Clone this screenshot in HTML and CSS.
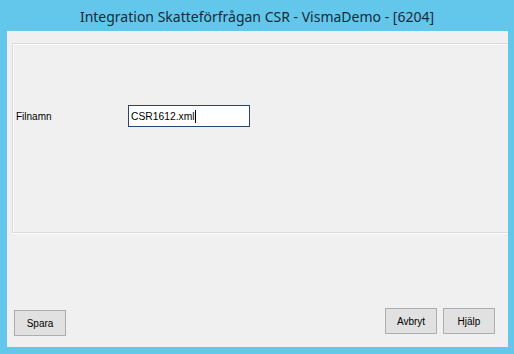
FILE: index.html
```html
<!DOCTYPE html>
<html lang="sv">
<head>
<meta charset="utf-8">
<title>Integration Skatteförfrågan CSR</title>
<link rel="stylesheet" href="styles.css">
</head>
<body>
<div class="window">
  <div class="titlebar">Integration Skatteförfrågan CSR - VismaDemo - [6204]</div>
  <div class="client">
    <div class="panel">
      <div class="row">
        <span class="label">Filnamn</span>
        <div class="input"><span class="value">CSR1612.xml</span><span class="caret"></span></div>
      </div>
    </div>
    <div class="footer">
      <button class="btn btn-low">Spara</button>
      <div class="right">
        <button class="btn">Avbryt</button>
        <button class="btn">Hjälp</button>
      </div>
    </div>
  </div>
</div>
</body>
</html>
```
FILE: styles.css
```css
html, body {
  margin: 0;
  padding: 0;
}
body {
  background: #62c7ea;
  font-family: "Liberation Sans", Arial, sans-serif;
  font-size: 10px;
  color: #000;
}
.window {
  width: 514px;
  height: 354px;
  display: flex;
  flex-direction: column;
  background: #62c7ea;
  box-sizing: border-box;
}
.titlebar {
  height: 31px;
  flex: 0 0 31px;
  display: flex;
  align-items: center;
  justify-content: center;
  font-family: "Noto Sans", "Open Sans", sans-serif;
  font-size: 14px;
  color: #19293a;
  padding-top: 1px;
  box-sizing: border-box;
}
.client {
  flex: 1;
  margin: 0 6px 7px 7px;
  background: #f0f0f0;
  display: flex;
  flex-direction: column;
}
.panel {
  margin: 12px 0 0 5px;
  height: 190px;
  border-top: 1px solid #dadada;
  border-left: 1px solid #dadada;
  border-bottom: 1px solid #dadada;
  box-shadow: inset 1px 1px 0 #fbfbfb, 0 1px 0 #fcfcfc;
  box-sizing: border-box;
  padding: 61px 0 0 3px;
}
.row {
  display: flex;
  align-items: center;
}
.label {
  width: 112px;
  padding-top: 1px;
}
.input {
  width: 122px;
  height: 22px;
  box-sizing: border-box;
  border: 1px solid #26466e;
  background: #fff;
  display: flex;
  align-items: center;
  padding-left: 2px;
  font-size: 10.3px;
}
.caret {
  width: 1px;
  height: 13px;
  background: #000;
  margin-left: 0;
}
.footer {
  flex: 1;
  display: flex;
  justify-content: space-between;
  align-items: flex-end;
  padding: 0 13px 11px 7px;
}
.right {
  display: flex;
  gap: 6px;
  margin-bottom: 2px;
}
.btn {
  width: 52px;
  height: 26px;
  box-sizing: border-box;
  border: 1px solid #adadad;
  background: #e1e1e1;
  font-family: "Liberation Sans", Arial, sans-serif;
  font-size: 10px;
  color: #000;
  padding: 0;
  margin: 0;
}
```
